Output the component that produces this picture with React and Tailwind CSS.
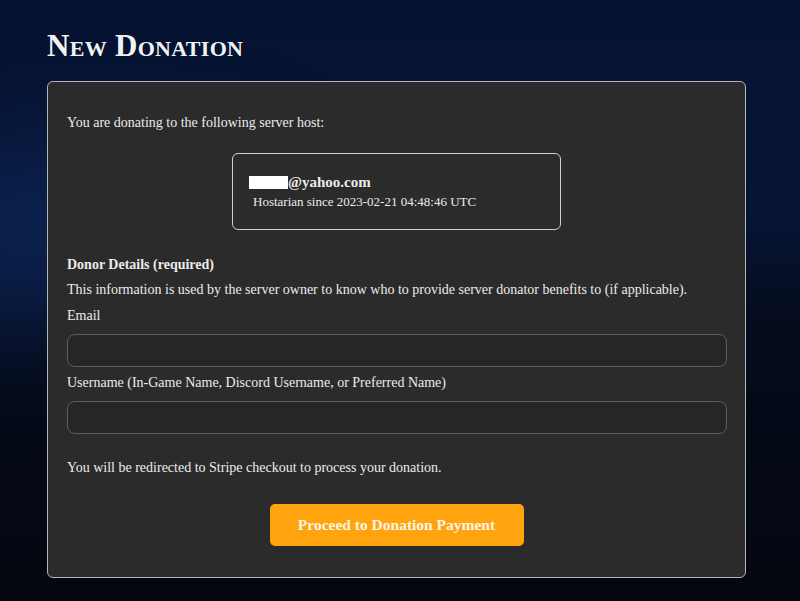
export default function App() {
  const serif = { fontFamily: '"Liberation Serif", "DejaVu Serif", serif' }

  return (
    <div
      className="relative h-[601px] w-full overflow-hidden bg-[linear-gradient(180deg,#061230_0%,#061535_35%,#050b1c_55%,#04070f_100%)]"
      style={serif}
    >
      <div className="pointer-events-none absolute left-[-120px] top-[150px] h-[180px] w-[420px] rounded-full bg-[#0d2658] opacity-70 blur-[50px]" />
      <div className="relative px-[47px] pt-[30px]">
        <h1 className="text-[31px] font-bold leading-[32px] text-[#f2f2f2] [font-variant:small-caps] tracking-[0.3px]">
          New Donation
        </h1>

        <div className="mt-[19px] w-[699px] rounded-[6px] border border-[#b5b5b5] bg-[#2b2b2b] px-[19px] pb-[31px] pt-[31px] text-[14px] leading-5 text-[#ececec]">
          <p>You are donating to the following server host:</p>

          <div className="mx-auto mt-[20px] h-[77px] w-[329px] rounded-[6px] border border-[#cfcfcf] px-[16px] pt-[18px] text-[13px]">
            <div className="flex items-center text-[15px] font-bold">
              <span className="inline-block h-[13px] w-[39px] bg-white" />
              <span>@yahoo.com</span>
            </div>
            <div className="pl-[4px]">Hostarian since 2023-02-21 04:48:46 UTC</div>
          </div>

          <p className="mt-[25px] font-bold">Donor Details (required)</p>
          <p className="mt-[5px]">
            This information is used by the server owner to know who to provide server donator benefits to (if applicable).
          </p>

          <label className="mt-[6px] block">
            <span className="block">Email</span>
            <input
              type="email"
              className="mt-[8px] block h-[33px] w-[660px] rounded-[8px] border border-[#5c5c63] bg-[#262626] px-3 text-[#ececec] outline-none"
            />
          </label>

          <label className="mt-[6px] block">
            <span className="block">Username (In-Game Name, Discord Username, or Preferred Name)</span>
            <input
              type="text"
              className="mt-[8px] block h-[33px] w-[660px] rounded-[8px] border border-[#5c5c63] bg-[#262626] px-3 text-[#ececec] outline-none"
            />
          </label>

          <p className="mt-[24px]">You will be redirected to Stripe checkout to process your donation.</p>

          <div className="mt-[26px] flex justify-center">
            <button className="h-[42px] w-[254px] rounded-[5px] bg-[#ffa30e] text-[15.5px] font-bold text-[#fff6e6]">
              Proceed to Donation Payment
            </button>
          </div>
        </div>
      </div>
    </div>
  )
}
